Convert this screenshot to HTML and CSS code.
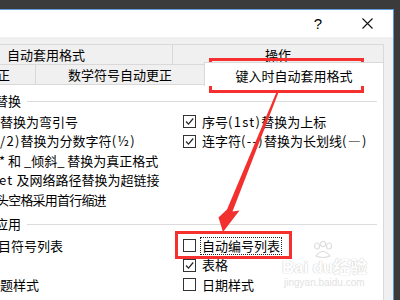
FILE: index.html
```html
<!DOCTYPE html>
<html lang="zh-CN">
<head>
<meta charset="utf-8">
<title>自动更正</title>
<link rel="stylesheet" href="styles.css">
</head>
<body>
<div class="window">
  <div class="titlebar">
    <span class="help">?</span>
    <svg class="close" width="11" height="11" viewBox="0 0 11 11"><path d="M0.5 0.5 L10.5 10.5 M10.5 0.5 L0.5 10.5" stroke="#111" stroke-width="1.1" fill="none"/></svg>
  </div>
  <div class="dialog">
    <div class="tabrow row1">
      <div class="tab t-auto">自动套用格式</div>
      <div class="tab t-ops">操作</div>
    </div>
    <div class="tabrow row2">
      <div class="tab t-cut"><span class="cut-text">正</span></div>
      <div class="tab t-math">数学符号自动更正</div>
      <div class="tab active">键入时自动套用格式</div>
    </div>
    <div class="panel">
      <div class="group-title"><span class="gt-text">替换</span><span class="gt-line"></span></div>
      <div class="grid g1">
        <div class="lcell"><span class="lab">替换为弯引号</span></div>
        <div class="rcell"><span class="cb checked"><svg width="11" height="11" viewBox="0 0 11 11"><polyline points="2,5.5 4.5,8.2 9.2,2.5" fill="none" stroke="#222" stroke-width="1.2"/></svg></span><span class="lab">序号<span class="lat">(1st)</span>替换为上标</span></div>
        <div class="lcell"><span class="lab"><span class="lat">/2)</span>替换为分数字符<span class="lat">(½)</span></span></div>
        <div class="rcell"><span class="cb checked"><svg width="11" height="11" viewBox="0 0 11 11"><polyline points="2,5.5 4.5,8.2 9.2,2.5" fill="none" stroke="#222" stroke-width="1.2"/></svg></span><span class="lab">连字符<span class="lat">(--)</span>替换为长划线<span class="lat">(—)</span></span></div>
        <div class="lcell"><span class="lab cut-a">* 和 _倾斜_ 替换为真正格式</span></div>
        <div class="rcell"></div>
        <div class="lcell"><span class="lab cut-b"><span class="lat">et</span> 及网络路径替换为超链接</span></div>
        <div class="rcell"></div>
        <div class="lcell"><span class="lab cut-c">头空格采用首行缩进</span></div>
        <div class="rcell"></div>
      </div>
      <div class="group-title gt2"><span class="gt-text">应用</span><span class="gt-line"></span></div>
      <div class="grid g2">
        <div class="lcell"><span class="lab cut-d">目符号列表</span></div>
        <div class="rcell"><span class="cb"></span><span class="lab focus">自动编号列表</span></div>
        <div class="lcell"></div>
        <div class="rcell"><span class="cb checked"><svg width="11" height="11" viewBox="0 0 11 11"><polyline points="2,5.5 4.5,8.2 9.2,2.5" fill="none" stroke="#222" stroke-width="1.2"/></svg></span><span class="lab">表格</span></div>
        <div class="lcell"><span class="lab">题样式</span></div>
        <div class="rcell"><span class="cb"></span><span class="lab">日期样式</span></div>
      </div>
    </div>
  </div>
</div>

<div class="watermark">
  <svg class="paw" width="28" height="18" viewBox="0 0 28 18">
    <g fill="none" stroke="#dedede" stroke-width="1.2">
      <ellipse cx="7" cy="5" rx="2.5" ry="3"/>
      <ellipse cx="13" cy="3" rx="2.5" ry="2.6"/>
      <ellipse cx="19" cy="5" rx="2.5" ry="3"/>
      <path d="M6 15 Q13 6 20 15 Q13 18 6 15 Z"/>
    </g>
  </svg>
  <div class="wm-big">Bai<span class="wm-du">du</span>经验</div>
  <div class="wm-small">jingyan.baidu.com</div>
</div>

<div class="mark mark-tab"></div>
<div class="mark mark-list"></div>
<svg class="arrow" width="400" height="300" viewBox="0 0 400 300">
  <polygon points="276.3,92.5 278.2,93.2 232.5,211.5 239.5,210.5 223,232 218.5,217.5 227,209.5" fill="#f2312e"/>
</svg>
</body>
</html>
```

FILE: styles.css
```css
html, body {
  margin: 0;
  padding: 0;
}
body {
  width: 400px;
  height: 300px;
  overflow: hidden;
  background: #3b3b3b;
  font-family: "Noto Sans CJK SC", "Microsoft YaHei", sans-serif;
  font-size: 13px;
  color: #000;
  position: relative;
}
.window {
  margin-top: 9px;
  width: 394px;
  height: 291px;
  box-sizing: border-box;
  border-top: 1px solid #5b9ad6;
  border-right: 1px solid #5b9ad6;
  background: #f0f0f0;
  overflow: hidden;
}
.titlebar {
  height: 27px;
  background: #ffffff;
  display: flex;
  align-items: center;
  justify-content: flex-end;
}
.help {
  font-family: "Liberation Sans", sans-serif;
  font-size: 15px;
  line-height: 16px;
  margin-right: 40px;
}
.close {
  display: block;
  margin-right: 20px;
}
.dialog {
  padding: 7px 9px 0 0;
}
.tabrow {
  display: flex;
  height: 20px;
  box-sizing: border-box;
  border-top: 1px solid #d9d9d9;
}
.tab {
  box-sizing: border-box;
  height: 19px;
  line-height: 19px;
  white-space: nowrap;
  overflow: hidden;
  border-right: 1px solid #d9d9d9;
}
.t-auto {
  width: 173px;
  padding-left: 7px;
}
.t-ops {
  flex: 1;
  text-align: center;
}
.t-cut {
  width: 36px;
}
.cut-text {
  display: inline-block;
  margin-left: -3px;
}
.t-math {
  width: 168px;
  text-align: center;
  border-right: none;
}
.active {
  flex: 1;
  position: relative;
  z-index: 1;
  margin-top: -3px;
  height: 24px;
  padding-top: 3px;
  line-height: 19px;
  text-align: center;
  background: #ffffff;
  border-top: 1px solid #d9d9d9;
  border-left: 1px solid #d9d9d9;
  border-right: 1px solid #d9d9d9;
}
.panel {
  background: #ffffff;
  border-top: 1px solid #d9d9d9;
  border-right: 1px solid #d9d9d9;
  height: 230px;
  padding: 6px 6px 0 0;
}
.group-title {
  height: 20px;
  display: flex;
  align-items: center;
  white-space: nowrap;
}
.gt-text {
  margin-left: -5px;
  line-height: 20px;
}
.gt-line {
  flex: 1;
  height: 1px;
  background: #dcdcdc;
  margin-left: 6px;
}
.gt2 {
  margin-top: 4.5px;
}
.grid {
  display: grid;
  grid-template-columns: 183px 1fr;
  grid-auto-rows: 19.5px;
}
.g1 {
  margin-top: 1px;
}
.g2 {
  margin-top: 2px;
}
.lcell, .rcell {
  display: flex;
  align-items: center;
  white-space: nowrap;
  overflow: hidden;
}
.lab {
  line-height: 16px;
}
.lat {
  letter-spacing: 1.3px;
}
.cut-a { margin-left: -1px; }
.cut-b { margin-left: -1px; }
.cut-c { margin-left: -4px; letter-spacing: -0.8px; }
.cut-d { margin-left: -2px; }
.cb {
  flex: none;
  width: 13px;
  height: 13px;
  box-sizing: border-box;
  border: 1px solid #333;
  background: #fff;
  margin-right: 6px;
  display: flex;
  align-items: center;
  justify-content: center;
}
.cb svg {
  display: block;
}
.focus {
  border: 1px dotted #222;
  padding: 0 1px;
  margin-left: -2px;
}
.mark {
  position: absolute;
  box-sizing: border-box;
  border: 3px solid #f5302e;
}
.mark-tab {
  left: 209px;
  top: 58px;
  width: 155px;
  height: 35px;
}
.mark-list {
  left: 175px;
  top: 231px;
  width: 117px;
  height: 28px;
}
.arrow {
  position: absolute;
  left: 0;
  top: 0;
  pointer-events: none;
}
.watermark {
  position: absolute;
  left: 282px;
  top: 241px;
  width: 90px;
  color: #e6e6e6;
  pointer-events: none;
}
.paw {
  display: block;
  margin-left: 28px;
}
.wm-big {
  font-family: "Liberation Sans", "Noto Sans CJK SC", sans-serif;
  font-size: 17px;
  font-weight: bold;
  line-height: 18px;
  white-space: nowrap;
  color: #ffffff;
  text-shadow: 0 0 1px #c8c8c8, 0 0 1px #c8c8c8;
}
.wm-du {
  margin-left: 4px;
}
.wm-small {
  font-family: "Liberation Sans", sans-serif;
  font-size: 10px;
  line-height: 10px;
  margin-top: 1px;
  margin-left: 2px;
  color: #e2e2e2;
  white-space: nowrap;
}
```
